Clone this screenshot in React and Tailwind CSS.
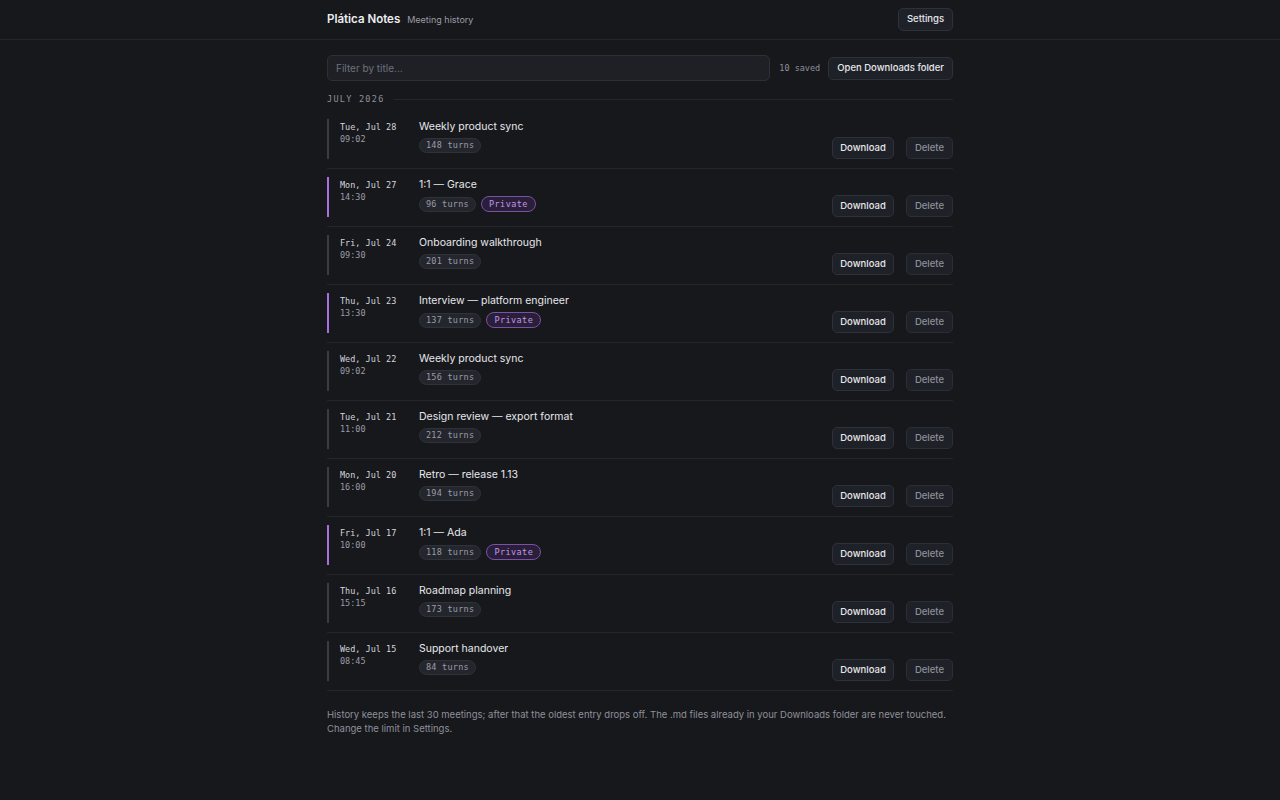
const meetings = [
  { day: 'Tue, Jul 28', time: '09:02', title: 'Weekly product sync', turns: 148 },
  { day: 'Mon, Jul 27', time: '14:30', title: '1:1 — Grace', turns: 96, private: true },
  { day: 'Fri, Jul 24', time: '09:30', title: 'Onboarding walkthrough', turns: 201 },
  { day: 'Thu, Jul 23', time: '13:30', title: 'Interview — platform engineer', turns: 137, private: true },
  { day: 'Wed, Jul 22', time: '09:02', title: 'Weekly product sync', turns: 156 },
  { day: 'Tue, Jul 21', time: '11:00', title: 'Design review — export format', turns: 212 },
  { day: 'Mon, Jul 20', time: '16:00', title: 'Retro — release 1.13', turns: 194 },
  { day: 'Fri, Jul 17', time: '10:00', title: '1:1 — Ada', turns: 118, private: true },
  { day: 'Thu, Jul 16', time: '15:15', title: 'Roadmap planning', turns: 173 },
  { day: 'Wed, Jul 15', time: '08:45', title: 'Support handover', turns: 84 },
]

const mono = "font-['DejaVu_Sans_Mono',monospace]"

function MeetingRow({ m }) {
  return (
    <div className="flex pt-[8px] pb-[9px] border-b border-[#24262c]">
      <div
        className={`w-[92px] h-[40px] pl-[11px] pt-[2px] border-l-2 ${
          m.private ? 'border-[#a86fe0]' : 'border-[#3a3c44]'
        }`}
      >
        <p className={`${mono} text-[8.5px] leading-[12px] text-[#d4d6dc]`}>{m.day}</p>
        <p className={`${mono} text-[8.5px] leading-[12px] text-[#9a9ca6]`}>{m.time}</p>
      </div>
      <div className="flex-1 pt-[1px]">
        <p className="text-[10.5px] leading-[14px] text-[#e6e7eb]">{m.title}</p>
        <div className="flex items-center gap-[5px] mt-[4px]">
          <span
            className={`${mono} h-[15px] px-[6px] flex items-center rounded-full bg-[#24262d] border border-[#30323a] text-[8.5px] text-[#9a9ca6] tracking-[0.03em]`}
          >
            {m.turns} turns
          </span>
          {m.private && (
            <span
              className={`${mono} h-[16px] px-[7px] flex items-center rounded-full bg-[#2a1f38] border border-[#7c4fa8] text-[8.5px] text-[#c496ee] tracking-[0.05em]`}
            >
              Private
            </span>
          )}
        </div>
      </div>
      <div className="flex items-end gap-[12px]">
        <button className="h-[22px] w-[62px] rounded-[5px] bg-[#1f2128] border border-[#2f3139] text-[9.5px] font-medium text-[#e6e7eb]">
          Download
        </button>
        <button className="h-[22px] w-[47px] rounded-[5px] bg-[#1f2128] border border-[#2c2e36] text-[9.5px] font-medium text-[#8e909a]">
          Delete
        </button>
      </div>
    </div>
  )
}

export default function App() {
  return (
    <div className="min-h-screen bg-[#17181c] font-['Inter',sans-serif] text-[#e6e7eb]">
      {/* Top bar */}
      <header className="h-[40px] border-b border-[#24262c]">
        <div className="w-[626px] mx-auto h-full flex items-center justify-between">
          <div className="flex items-baseline gap-[7px]">
            <h1 className="text-[11.5px] font-semibold text-[#eceef2]">Plática Notes</h1>
            <span className="text-[9px] text-[#9a9ca6]">Meeting history</span>
          </div>
          <button className="h-[23px] px-[8px] rounded-[5px] bg-[#1f2128] border border-[#2f3139] text-[9.5px] font-medium text-[#e6e7eb]">
            Settings
          </button>
        </div>
      </header>

      <main className="w-[626px] mx-auto pt-[15px]">
        {/* Toolbar */}
        <div className="flex items-center h-[26px]">
          <input
            placeholder="Filter by title..."
            className="flex-1 h-[26px] px-[8px] rounded-[5px] bg-[#1e2026] border border-[#2d2f36] text-[10px] text-[#e6e7eb] placeholder:text-[#6f717b] outline-none"
          />
          <span className={`${mono} ml-[9px] text-[8.5px] text-[#8e909a]`}>10 saved</span>
          <button className="ml-[8px] h-[23px] px-[8px] rounded-[5px] bg-[#1f2128] border border-[#2f3139] text-[9.5px] font-medium text-[#e6e7eb]">
            Open Downloads folder
          </button>
        </div>

        {/* Month group */}
        <div className="flex items-center gap-[9px] mt-[12px]">
          <span className={`${mono} text-[8.5px] leading-[12px] tracking-[0.15em] text-[#8e909a]`}>
            JULY 2026
          </span>
          <div className="flex-1 h-px bg-[#24262c]" />
        </div>

        <div className="mt-[6px]">
          {meetings.map((m, i) => (
            <MeetingRow key={i} m={m} />
          ))}
        </div>

        <p className="mt-[17px] text-[9.5px] leading-[14px] text-[#8e909a]">
          History keeps the last 30 meetings; after that the oldest entry drops off. The .md files already in your
          Downloads folder are never touched.
          <br />
          Change the limit in Settings.
        </p>
      </main>
    </div>
  )
}
